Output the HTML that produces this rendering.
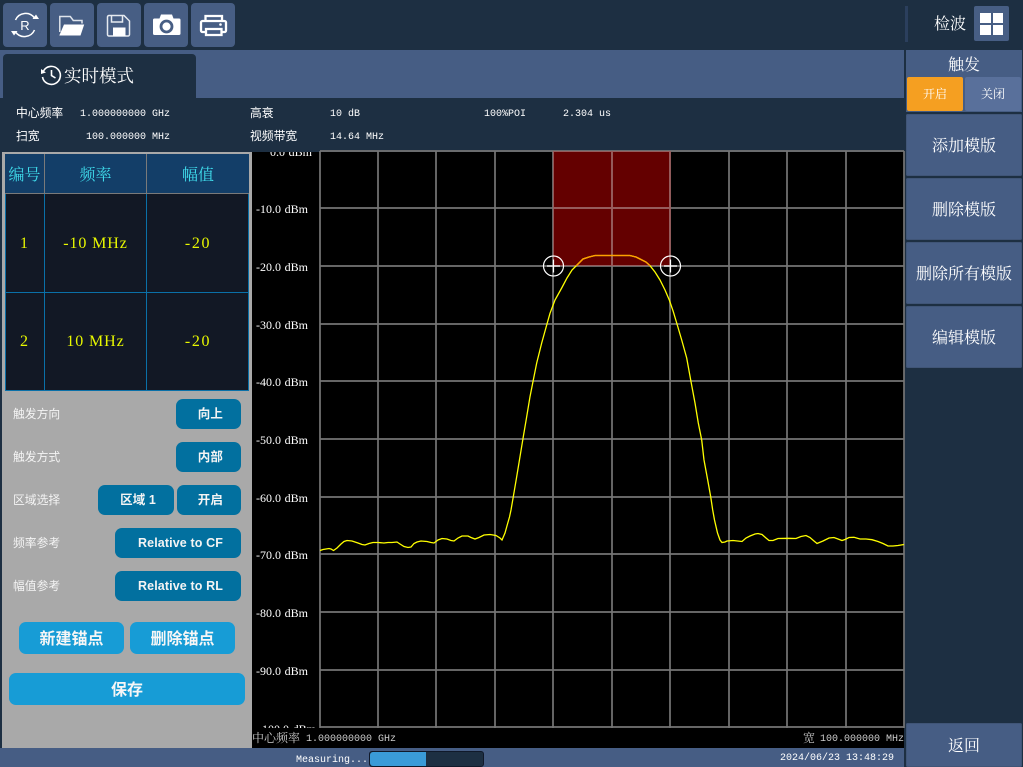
<!DOCTYPE html>
<html><head><meta charset="utf-8"><style>
html,body{margin:0;padding:0;width:1023px;height:767px;overflow:hidden;background:#1d2f42}
body{position:relative;font-family:"Liberation Sans","Noto Sans CJK SC",sans-serif;color:#fff}
div,span{position:absolute;box-sizing:border-box}
.t{white-space:nowrap;line-height:1}
.m{font-family:"Liberation Mono","Noto Serif CJK SC",monospace;font-size:10px}
.c{font-family:"WenQuanYi Zen Hei","Noto Sans CJK SC",sans-serif;font-size:11.8px}
.tb{background:#475e84;border-radius:4px;width:44px;height:44px;top:3px}
.tb svg{position:absolute;left:0;top:0}
.rb{left:906px;width:116px;height:62px;background:#465d84;border-radius:2px;display:flex;align-items:center;justify-content:center;font:16px "WenQuanYi Zen Hei","Noto Serif CJK SC",serif;box-shadow:inset 0 0 0 1px #405577;padding-bottom:2px}
.b{background:#02709f;border-radius:7px;height:30px;font:bold 12.5px/31px "Liberation Sans","Noto Sans CJK SC",sans-serif;letter-spacing:.12px;text-align:right;padding-right:18px;color:#f4f4f4}
.l{left:13px;font:11.8px/1 "Noto Sans CJK SC",sans-serif;color:#f4f4f4;white-space:nowrap}
.a{background:#179cd6;border-radius:7px;height:32px;top:622px;font:bold 16px/30px "Noto Sans CJK SC",sans-serif;text-align:center;color:#f6f6f6}
.h{top:154px;height:39px;color:#3fdcec;font:16px/39px "Noto Serif CJK SC",serif;text-align:center;background:#133e68}
.v{color:#e8f800;font:16px/1 "Liberation Serif",serif;letter-spacing:.9px;white-space:nowrap;text-align:center}
.d{font:12px/14px "Liberation Serif",serif;white-space:pre;word-spacing:-1.2px;color:#fff}
</style></head><body>

<div class="tb" style="left:3px"><svg width="44" height="44" viewBox="0 0 44 44" fill="none" stroke="#fff" stroke-width="1.500"><path d="M12.500 17A11 11 0 0 1 31.500 15M31.500 27A11 11 0 0 1 12.500 29"/><path d="M29.500 16h6.500l-3-4.500zM14.500 28H8l3 4.500z" fill="#fff" stroke="none"/><text x="22" y="27" font-family="Liberation Sans" font-size="13" text-anchor="middle" fill="#fff" stroke="none">R</text></svg></div>
<div class="tb" style="left:50px"><svg width="44" height="44" viewBox="0 0 44 44" fill="none"><path d="M9.800 29V13.500h10.500l3 4h8.700v3" stroke="#dfe4ec" stroke-width="1.500"/><path d="M14 21.500H34.200L30.500 32.500H9.300z" fill="#fff"/></svg></div>
<div class="tb" style="left:97px"><svg width="44" height="44" viewBox="0 0 44 44" fill="none" stroke="#e6eaf0" stroke-width="1.500"><path d="M12 12.500h15l5.500 5.500v13.500a1.500 1.500 0 0 1-1.500 1.500h-19a1.500 1.500 0 0 1-1.500-1.500v-17.500a1.500 1.500 0 0 1 1.500-1.500z"/><path d="M14.500 13v6h11v-6"/><path d="M16 24.500h12.500v8.500H16z" fill="#fff" stroke="none"/></svg></div>
<div class="tb" style="left:144px"><svg width="44" height="44" viewBox="0 0 44 44"><path d="M10.500 15.500h5l1.500-4h11l1.500 4h5.500a1.500 1.500 0 0 1 1.500 1.500v13.500a1.500 1.500 0 0 1-1.500 1.500H10.500A1.500 1.500 0 0 1 9 30.500V17a1.500 1.500 0 0 1 1.500-1.500z" fill="#fff"/><circle cx="22.500" cy="23.500" r="5.500" fill="none" stroke="#475e84" stroke-width="2.800"/></svg></div>
<div class="tb" style="left:191px"><svg width="44" height="44" viewBox="0 0 44 44" fill="none" stroke="#fff" stroke-width="2.300"><path d="M14.500 18v-5h16.500v5"/><rect x="10" y="18" width="25" height="11" rx="1.500"/><path d="M15 26h15.500v6H15z" fill="#475e84"/><circle cx="29.500" cy="21.500" r="1.300" fill="#fff" stroke="none"/></svg></div>

<div style="left:905px;top:6px;width:3px;height:36px;background:#2b3f5d"></div>
<div class="t" style="left:934px;top:15px;font:16px/1 'WenQuanYi Zen Hei','Noto Serif CJK SC',serif">检波</div>
<div style="left:974px;top:6px;width:35px;height:35px;background:#475e84;border-radius:2px"></div>
<div style="left:980px;top:12.500px;width:10.500px;height:10px;background:#fff"></div>
<div style="left:992.500px;top:12.500px;width:10.500px;height:10px;background:#fff"></div>
<div style="left:980px;top:25px;width:10.500px;height:10px;background:#fff"></div>
<div style="left:992.500px;top:25px;width:10.500px;height:10px;background:#fff"></div>

<div style="left:0;top:50px;width:904px;height:48px;background:#465d84"></div>
<div style="left:3px;top:54px;width:193px;height:44px;background:#1d2f42;border-radius:4px 4px 0 0"></div>
<svg style="position:absolute;left:40px;top:64px" width="22" height="22" viewBox="0 0 22 22" fill="none" stroke="#fff" stroke-width="1.600"><path d="M3.500 7A9 9 0 1 1 2.500 13"/><path d="M1 5l5 3.500-5 1.500z" fill="#fff" stroke="none"/><path d="M11.500 6v5.500l4 2.500"/></svg>
<div class="t" style="left:64px;top:67px;font:17.500px/1 'WenQuanYi Zen Hei','Noto Serif CJK SC',serif">实时模式</div>

<div class="t c" style="left:16px;top:107px">中心频率</div>
<div class="t m" style="left:80px;top:110px">1.000000000 GHz</div>
<div class="t c" style="left:250px;top:107px">高衰</div>
<div class="t m" style="left:330px;top:110px">10 dB</div>
<div class="t m" style="left:484px;top:110px">100%POI</div>
<div class="t m" style="left:563px;top:110px">2.304 us</div>
<div class="t c" style="left:16px;top:130px">扫宽</div>
<div class="t m" style="left:86px;top:133px">100.000000 MHz</div>
<div class="t c" style="left:250px;top:130px">视频带宽</div>
<div class="t m" style="left:330px;top:133px">14.64 MHz</div>

<!-- left panel -->
<div style="left:2px;top:152px;width:250px;height:596px;background:#a9a9a9"></div>
<div style="left:5px;top:154px;width:244px;height:237px;background:#121825;border:1px solid #0a70a8;border-top:0"></div>
<div class="h" style="left:5px;width:39px">编号</div>
<div class="h" style="left:45px;width:101px">频率</div>
<div class="h" style="left:147px;width:102px">幅值</div>
<div style="left:5px;top:193px;width:244px;height:1px;background:#7a7a7a"></div>
<div style="left:44px;top:154px;width:1px;height:39px;background:#7a7a7a"></div>
<div style="left:146px;top:154px;width:1px;height:39px;background:#7a7a7a"></div>
<div style="left:44px;top:194px;width:1px;height:196px;background:#0a70a8"></div>
<div style="left:146px;top:194px;width:1px;height:196px;background:#0a70a8"></div>
<div style="left:5px;top:292px;width:244px;height:1px;background:#0a70a8"></div>
<div class="v" style="left:5px;width:39px;top:236px">1</div>
<div class="v" style="left:45px;width:101px;top:236px">-10 MHz</div>
<div class="v" style="left:147px;width:102px;top:236px;letter-spacing:1.6px">-20</div>
<div class="v" style="left:5px;width:39px;top:334px">2</div>
<div class="v" style="left:45px;width:101px;top:334px">10 MHz</div>
<div class="v" style="left:147px;width:102px;top:334px;letter-spacing:1.6px">-20</div>

<div class="l" style="top:408px">触发方向</div>
<div class="l" style="top:451px">触发方式</div>
<div class="l" style="top:494px">区域选择</div>
<div class="l" style="top:537px">频率参考</div>
<div class="l" style="top:580px">幅值参考</div>
<div class="b" style="left:176px;top:399px;width:65px">向上</div>
<div class="b" style="left:176px;top:442px;width:65px">内部</div>
<div class="b" style="left:98px;top:485px;width:76px">区域 1</div>
<div class="b" style="left:177px;top:485px;width:64px">开启</div>
<div class="b" style="left:115px;top:528px;width:126px">Relative to CF</div>
<div class="b" style="left:115px;top:571px;width:126px">Relative to RL</div>
<div class="a" style="left:19px;width:105px">新建锚点</div>
<div class="a" style="left:130px;width:105px">删除锚点</div>
<div class="a" style="left:9px;width:236px;top:673px">保存</div>

<!-- plot -->
<div style="left:252px;top:152px;width:652px;height:596px;background:#000;overflow:hidden">
<span class="d" style="left:18px;top:-7px">0.0  dBm</span>
<span class="d" style="left:4px;top:50px">-10.0  dBm</span>
<span class="d" style="left:4px;top:108px">-20.0  dBm</span>
<span class="d" style="left:4px;top:166px">-30.0  dBm</span>
<span class="d" style="left:4px;top:223px">-40.0  dBm</span>
<span class="d" style="left:4px;top:281px">-50.0  dBm</span>
<span class="d" style="left:4px;top:339px">-60.0  dBm</span>
<span class="d" style="left:4px;top:396px">-70.0  dBm</span>
<span class="d" style="left:4px;top:454px">-80.0  dBm</span>
<span class="d" style="left:4px;top:512px">-90.0  dBm</span>
<div style="left:0;top:0;width:68px;height:576px;overflow:hidden"><span class="d" style="left:6px;top:570px">-100.0  dBm</span></div>
</div>
<svg style="position:absolute;left:0;top:0" width="1023" height="767" viewBox="0 0 1023 767" fill="none">
<defs><clipPath id="rz"><rect x="553" y="151" width="118" height="115"/></clipPath></defs>
<rect x="553" y="151" width="117" height="115" fill="#640000"/>
<g stroke="#757575" stroke-width="1.700">
<path d="M320 151v577M378 151v577M436 151v577M495 151v577M553 151v577M612 151v577M670 151v577M729 151v577M787 151v577M846 151v577M904 151v577"/>
<path d="M320 151h584M320 208h584M320 266h584M320 324h584M320 381h584M320 439h584M320 497h584M320 554h584M320 612h584M320 670h584M320 727h584"/>
</g>
<path d="M553 151v115M612 151v115M670 151v115M553 151h117M553 208h117M553 266h117" clip-path="url(#rz)" stroke="#9c5c5c" stroke-width="1.700"/>
<path id="tr" stroke="#ffff00" stroke-width="1.300" d="M320 550.500L323 549.500L326 549L329 548.500L331 549L333.500 550.500L337 548L341 544L344 541.500L347 540.500L352 541L358 543L362 544.500L365 545L369 543.500L373 542.500L378 542.500L384 543L388 542.500L392 542.500L397 542L400 544L404 546.500L408 547.500L411 547L414 543.500L417 542L421 541L427 541.500L431 542.500L434 543L438 540L442 538.500L447 539L451 540.500L454 541L458 538L462 536L468 536L471 537.500L475 539L479 537.500L484 535L490 534.500L496 535.500L500 538L502 540L505 533L507.500 524L509.500 517L511 510L513.300 496.700L516.700 476.700L520 456.700L523.300 436.700L526.700 416.700L530 396.700L533.300 380L536.700 363L541.700 343L546.700 325L550 313.300L555 300L561.700 288L567 278L572 270L577 265L583 259L589 257L595 255.500L630 255.500L636 257L640 259L646 262L650 265.700L655 272L660 280L665 290L669.300 300L673.300 311.700L677.300 325L681.700 340L686.700 358L690.700 380L695 403L698.300 423L701.700 440L704 460L707.700 480L710.700 496.700L712.700 510L714.500 520L717.500 533L720 540L722 542.500L725 542L727 541L733 540.500L742 541.500L746 538L750 536L755 534L758 533.500L762 534.500L766 538L769 540.500L773 540.500L778 538.500L788 538.300L796 538.500L801 536.500L806 535.500L810 537.500L814 541L817 543.500L823 541L829 538L834 537.500L838 539L842 540.500L845 539.500L849 537.500L854 537.300L860 539L866 539L872 539.700L878 541.500L883 543.500L888 546L893 546L898 545.500L904 544.500"/>
<path clip-path="url(#rz)" stroke="#ffa000" stroke-width="1.300" d="M572 270L577 265L583 259L589 257L595 255.500L630 255.500L636 257L640 259L646 262L650 265.700"/>
<g stroke="#fff" stroke-width="1.200"><circle cx="553.500" cy="266" r="10"/><path d="M547 266h13M553.500 259.500v13"/><circle cx="670.500" cy="266" r="10"/><path d="M664 266h13M670.500 259.500v13"/></g>
</svg>
<div class="t" style="left:252px;top:732px;font:12px/1 'WenQuanYi Zen Hei','Noto Serif CJK SC',serif;color:#ccc">中心频率</div>
<div class="t m" style="left:306px;top:735px;color:#ccc">1.000000000 GHz</div>
<div class="t" style="left:803px;top:732px;font:12px/1 'WenQuanYi Zen Hei','Noto Serif CJK SC',serif;color:#ccc">宽</div>
<div class="t m" style="left:820px;top:735px;color:#ccc">100.000000 MHz</div>

<!-- status -->
<div style="left:0;top:748px;width:904px;height:19px;background:#465d84"></div>
<div class="t m" style="left:296px;top:756px">Measuring...</div>
<div style="left:369px;top:751px;width:115px;height:16px;background:#1d2f42;border:1px solid #10192a;border-radius:3px"></div>
<div style="left:370px;top:752px;width:56px;height:14px;background:#3a9bd8;border-radius:3px 0 0 3px"></div>
<div class="t m" style="left:780px;top:754px">2024/06/23 13:48:29</div>

<!-- right -->
<div style="left:906px;top:50px;width:116px;height:62px;background:#465d84"></div>
<div class="t" style="left:906px;width:116px;top:56px;text-align:center;font:16px/1 'WenQuanYi Zen Hei','Noto Serif CJK SC',serif">触发</div>
<div class="t" style="left:907px;top:77px;width:56px;height:34px;background:#f59f21;border-radius:2px;text-align:center;font:12px/34px 'WenQuanYi Zen Hei','Noto Serif CJK SC',serif">开启</div>
<div class="t" style="left:965px;top:77px;width:56px;height:34px;background:#59709b;border-radius:2px;text-align:center;font:12px/34px 'WenQuanYi Zen Hei','Noto Serif CJK SC',serif">关闭</div>
<div class="rb" style="top:114px">添加模版</div>
<div class="rb" style="top:178px">删除模版</div>
<div class="rb" style="top:242px">删除所有模版</div>
<div class="rb" style="top:306px">编辑模版</div>
<div class="rb" style="top:723px;height:44px">返回</div>
</body></html>
